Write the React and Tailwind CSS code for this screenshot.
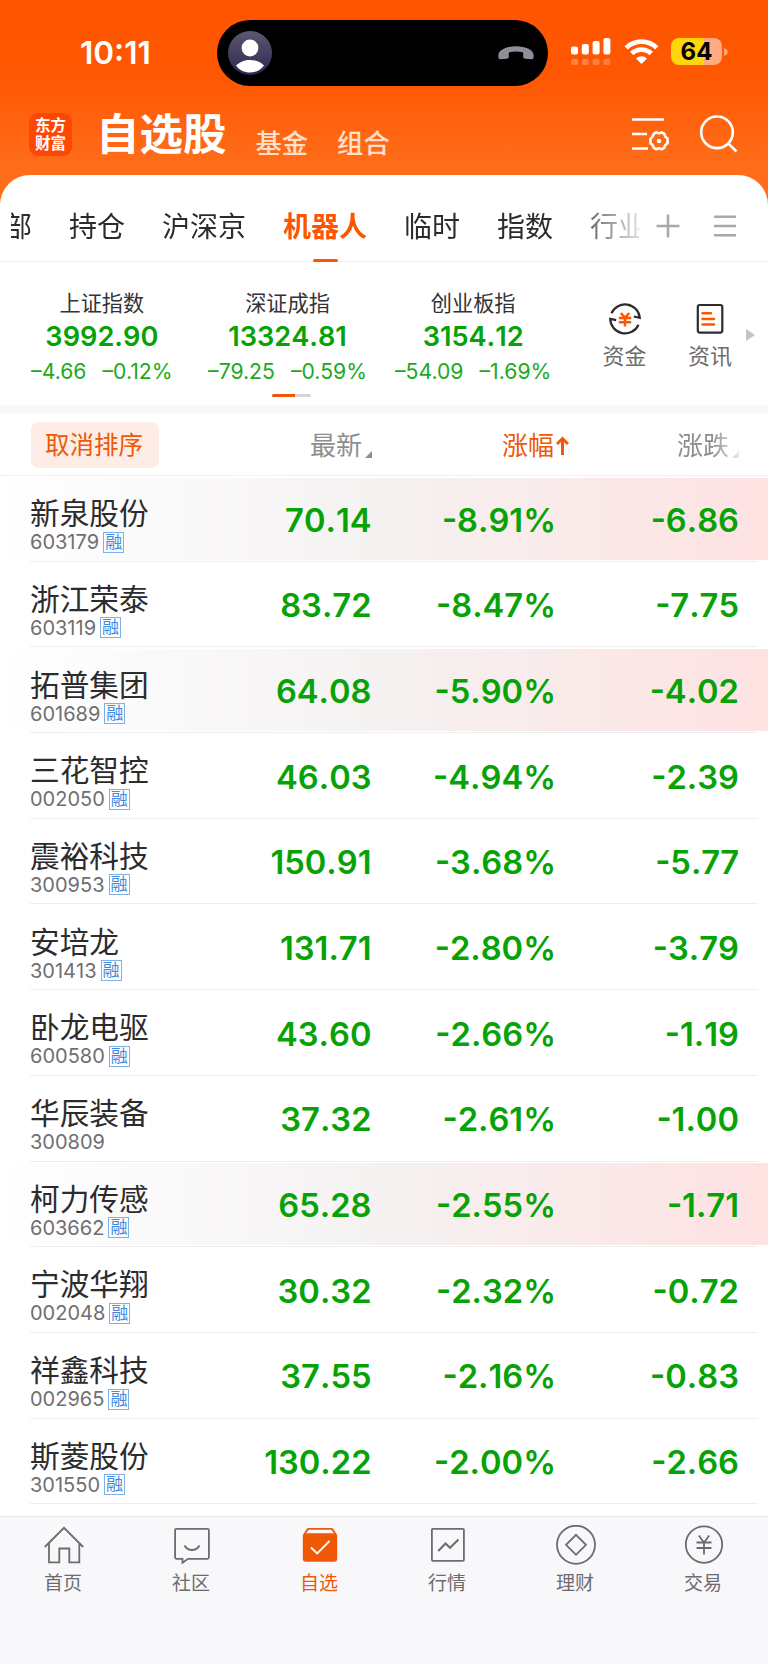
const indices = [
  { name: "上证指数", value: "3992.90", change: "–4.66", percent: "–0.12%" },
  { name: "深证成指", value: "13324.81", change: "–79.25", percent: "–0.59%" },
  { name: "创业板指", value: "3154.12", change: "–54.09", percent: "–1.69%" },
];

const stocks = [
  { name: "新泉股份", code: "603179", margin: true, price: "70.14", percent: "-8.91%", change: "-6.86", hot: true },
  { name: "浙江荣泰", code: "603119", margin: true, price: "83.72", percent: "-8.47%", change: "-7.75" },
  { name: "拓普集团", code: "601689", margin: true, price: "64.08", percent: "-5.90%", change: "-4.02", hot: true },
  { name: "三花智控", code: "002050", margin: true, price: "46.03", percent: "-4.94%", change: "-2.39" },
  { name: "震裕科技", code: "300953", margin: true, price: "150.91", percent: "-3.68%", change: "-5.77" },
  { name: "安培龙", code: "301413", margin: true, price: "131.71", percent: "-2.80%", change: "-3.79" },
  { name: "卧龙电驱", code: "600580", margin: true, price: "43.60", percent: "-2.66%", change: "-1.19" },
  { name: "华辰装备", code: "300809", margin: false, price: "37.32", percent: "-2.61%", change: "-1.00" },
  { name: "柯力传感", code: "603662", margin: true, price: "65.28", percent: "-2.55%", change: "-1.71", hot: true },
  { name: "宁波华翔", code: "002048", margin: true, price: "30.32", percent: "-2.32%", change: "-0.72" },
  { name: "祥鑫科技", code: "002965", margin: true, price: "37.55", percent: "-2.16%", change: "-0.83" },
  { name: "斯菱股份", code: "301550", margin: true, price: "130.22", percent: "-2.00%", change: "-2.66" },
];

function StatusBar() {
  return (
    <div className="flex h-[86px] items-start pt-5 text-white">
      <div className="ml-[80px] w-[137px] pt-[15px] text-[31.500px] leading-[36px] font-semibold [font-kerning:none]">10:11</div>
      <div className="flex h-[66px] w-[331px] items-center justify-between rounded-full bg-black pr-[14px] pl-[11px]">
        <svg width="44" height="44" viewBox="0 0 44 44">
          <defs>
            <linearGradient id="avatar" x1="0" y1="0" x2="0" y2="1">
              <stop offset="0" stopColor="#5c5670" />
              <stop offset="1" stopColor="#2f2850" />
            </linearGradient>
          </defs>
          <circle cx="22" cy="22" r="22" fill="url(#avatar)" />
          <circle cx="22" cy="17" r="8.4" fill="#fff" />
          <path d="M8 34.500C12 31 16 29 22 29s10 2 14 5.500C33 39 27.500 41.500 22 41.500S11 39 8 34.500Z" fill="#fff" />
        </svg>
        <svg width="36" height="14" viewBox="0 0 36 14" fill="#8f8d98">
          <path d="M.3 9.500C.3 4 8 .3 18 .3S35.700 4 35.700 9.500c0 3-.6 4-2.500 3.800l-6-.6c-1.400-.2-2-.8-2-2.200V7.500c0-1-.5-1.400-1.500-1.600-3.500-.7-7.900-.7-11.400 0-1 .2-1.500.6-1.500 1.600v3c0 1.400-.6 2-2 2.200l-6 .6C.9 13.500.3 12.500.3 9.500Z" />
        </svg>
      </div>
      <svg className="mt-[18px] ml-[23px]" width="40" height="27" viewBox="0 0 40 27" fill="#fff">
        <rect x="0" y="8.500" width="7" height="8" rx="2" />
        <rect x="10.800" y="6" width="7" height="10.500" rx="2" />
        <rect x="21.600" y="3" width="7" height="13.500" rx="2" />
        <rect x="32.400" y="0" width="7" height="16.500" rx="2" />
        <g opacity=".25">
          <rect x="0" y="20.700" width="7" height="6.300" rx="2" />
          <rect x="10.800" y="20.700" width="7" height="6.300" rx="2" />
          <rect x="21.600" y="20.700" width="7" height="6.300" rx="2" />
          <rect x="32.400" y="20.700" width="7" height="6.300" rx="2" />
        </g>
      </svg>
      <svg className="mt-[18px] ml-[12.500px]" width="35" height="27" viewBox="0 0 35 27">
        <g fill="none" stroke="#fff" strokeWidth="4.800">
          <path d="M2.200 9.900a22 22 0 0 1 30.600 0" />
          <path d="M7.700 15.600a14.200 14.200 0 0 1 19.600 0" />
        </g>
        <path d="M17.500 26 12 20.500a8 8 0 0 1 11 0Z" fill="#fff" />
      </svg>
      <div className="mt-[18px] ml-[12.500px] flex h-[27px] w-[51px] items-center justify-center rounded-[8px] bg-[linear-gradient(90deg,#ffd60a_64%,#ffaa80_64%)] text-[24px] leading-[28px] font-bold text-black">
        64
      </div>
      <svg className="mt-[28px] ml-[2px]" width="4" height="8" viewBox="0 0 4 8">
        <path d="M0 0c5 1.500 5 6.500 0 8Z" fill="#ffaa80" />
      </svg>
    </div>
  );
}

function Header() {
  return (
    <div className="flex h-[89px] items-start text-white">
      <div className="mt-[27px] ml-[29px] flex h-[43px] w-[43px] flex-col items-center justify-center rounded-[9px] bg-[#ff4705] text-[15.500px] leading-[17.500px] font-bold">
        <span>东方</span>
        <span>财富</span>
      </div>
      <h1 className="mt-[18px] ml-[24px] text-[43.500px] leading-[60px] font-bold">自选股</h1>
      <span className="mt-[38px] ml-[29px] text-[26.300px] leading-[40px] font-medium text-[#ffe0cf]">基金</span>
      <span className="mt-[38px] ml-[29px] text-[26.300px] leading-[40px] font-medium text-[#ffe0cf]">组合</span>
      <svg className="mt-[31px] ml-auto" width="38" height="36" viewBox="0 0 38 36" fill="none" stroke="#fff" strokeWidth="2.600">
        <path d="M0 2.500h32M0 17h15M0 31.500h16" />
        <path
          d="M24.300 15.300q2.700 1.900 5.400 0l2.700 1.600q.3 3.200 3.100 4.500v5q-2.800 1.300-3.100 4.300l-2.700 1.600q-2.700-1.900-5.400 0l-2.700-1.600q-.3-3-3.100-4.300v-5q2.800-1.300 3.100-4.500Z"
          strokeLinejoin="round"
        />
        <circle cx="27" cy="24" r="2.300" fill="#fff" stroke="none" />
      </svg>
      <svg className="mt-[29px] mr-[30px] ml-[30px]" width="38" height="38" viewBox="0 0 38 38" fill="none" stroke="#fff" strokeWidth="2.600">
        <circle cx="17" cy="17.300" r="15.800" />
        <path d="m28.200 28.300 8.300 8.200" />
      </svg>
    </div>
  );
}

function GroupTabs() {
  return (
    <div className="flex h-[87px] items-start border-b-[1.500px] border-[#eeeef0] text-[28px] leading-[40px] text-[#2c2c2e]">
      <div className="mt-[32px] ml-[11px] flex w-[628px] overflow-hidden whitespace-nowrap [mask-image:linear-gradient(90deg,#000_88%,transparent_102%)]">
        <div className="-ml-[7px] flex shrink-0 gap-[37px]">
          <span>部</span>
          <span>持仓</span>
          <span>沪深京</span>
          <div className="flex flex-col items-center font-bold text-[#ff5500]">
            <span>机器人</span>
            <span className="mt-[11.500px] h-[3px] w-[25px] rounded-full bg-[#ff5500]" />
          </div>
          <span>临时</span>
          <span>指数</span>
          <span>行业</span>
        </div>
      </div>
      <svg className="mt-[38.500px] ml-[17px]" width="24" height="24" viewBox="0 0 24 24" stroke="#a9a9ab" strokeWidth="2.600">
        <path d="M12 .5v23M.5 12h23" />
      </svg>
      <svg className="mt-[39.500px] ml-[34px]" width="22" height="23" viewBox="0 0 22 23" stroke="#a9a9ab" strokeWidth="2.400">
        <path d="M0 1.800h22M0 11h22M0 20.300h22" />
      </svg>
    </div>
  );
}

function IndexStrip() {
  return (
    <div className="flex h-[151px] flex-col border-b-8 border-[#f6f7f9]">
      <div className="flex h-[132px] items-start">
        <div className="ml-[9px] flex w-[557px]">
          {indices.map((item) => (
            <div key={item.name} className="flex flex-1 flex-col items-center whitespace-nowrap">
              <span className="mt-[25.500px] text-[21.200px] leading-[30px] text-[#333335]">{item.name}</span>
              <span className="mt-[4.500px] text-[27.200px] leading-[30px] font-semibold text-[#06a206] [font-kerning:none]">{item.value}</span>
              <div className="mt-[6px] flex gap-[16px] text-[21.200px] leading-[26px] text-[#1aaa1a]">
                <span>{item.change}</span>
                <span>{item.percent}</span>
              </div>
            </div>
          ))}
        </div>
        <div className="mt-[40px] ml-[25.500px] flex w-[66px] flex-col items-center text-[22px] leading-[30px] text-[#6c6c6e]">
          <svg width="34" height="34" viewBox="0 0 34 34" fill="none" strokeWidth="2.200">
            <path d="M3.500 11.300a14.800 14.800 0 0 1 28.300 4.500l-6-1.300M30.500 22.700A14.800 14.800 0 0 1 2.200 16.800l6 1.300" stroke="#2c2c2e" />
            <path d="m12.800 11 4.200 4.800 4.200-4.800M10.800 16h12.400M10.800 20.300h12.400M17 15.500v9" stroke="#ff5500" strokeWidth="2.500" />
          </svg>
          <span className="mt-[5px]">资金</span>
        </div>
        <div className="mt-[40px] ml-[19.500px] flex w-[66px] flex-col items-center text-[22px] leading-[30px] text-[#6c6c6e]">
          <svg width="34" height="34" viewBox="0 0 34 34" fill="none" strokeWidth="2.200">
            <rect x="4.800" y="3" width="24.500" height="27.600" rx="2" stroke="#2c2c2e" />
            <path d="M9.500 11.300h8.500M9.500 17h11.500M9.500 22.500h11.500" stroke="#ff5500" strokeWidth="2.400" strokeLinecap="round" />
          </svg>
          <span className="mt-[5px]">资讯</span>
        </div>
        <svg className="mt-[67px] ml-[3px]" width="9" height="12" viewBox="0 0 9 12">
          <path d="M0 0v12l9-6Z" fill="#c4c4c6" />
        </svg>
      </div>
      <div className="ml-[272px] flex h-[3px] w-[39px] overflow-hidden rounded-full bg-[#d3d5dc]">
        <span className="w-[23px] bg-[#ef5806]" />
      </div>
    </div>
  );
}

function SortMark() {
  return (
    <svg className="mt-[17px] ml-[3px]" width="7" height="7" viewBox="0 0 7 7">
      <path d="M7 0v7H0Z" fill="#8e8e90" />
    </svg>
  );
}

function TableHead() {
  return (
    <div className="flex h-[63px] items-center border-b-[1.500px] border-[#f0f0f2] pt-[2px] text-[26px] leading-[36px] text-[#8e8e90]">
      <button className="ml-[31px] h-[46px] w-[128px] rounded-[8px] bg-[#fdede6] pr-[2px] text-[24.500px] leading-[47px] text-[#ef5806]">
        取消排序
      </button>
      <div className="flex w-[213px] items-center justify-end pt-px">
        <span>最新</span>
        <SortMark />
      </div>
      <div className="flex w-[197px] items-center justify-end pt-px text-[#ef5806]">
        <span>涨幅</span>
        <svg className="ml-[2px]" width="13" height="20" viewBox="0 0 13 20" fill="none" stroke="#ef5806" strokeWidth="3">
          <path d="M6.500 19V2.500M1 8l5.500-5.500L12 8" />
        </svg>
      </div>
      <div className="flex w-[170px] items-center justify-end pt-px [mask-image:linear-gradient(90deg,#000_84%,transparent_104%)]">
        <span>涨跌</span>
        <SortMark />
      </div>
    </div>
  );
}

function StockRow({ stock }) {
  return (
    <div className="flex h-[85.700px] flex-col pt-[1.500px]">
      <div className={stock.hot ? "flex h-[82px] bg-[linear-gradient(90deg,#fff_0%,#f5f2f2_48%,#fee2e2_100%)]" : "flex h-[82px]"}>
        <div className="w-[170px] pl-[30px]">
          <div className="mt-[16.700px] text-[29.700px] leading-[38px] text-[#2c2c2e]">{stock.name}</div>
          <div className="-mt-[1px] flex items-center">
            <span className="text-[20px] leading-[22px] text-[#6f6f71] [font-kerning:none]">{stock.code}</span>
            {stock.margin && (
              <span className="ml-[4px] h-[21px] w-[21px] border-[1.500px] border-[#7fb0ea] text-center text-[17px] leading-[18px] text-[#3f8ae0]">
                融
              </span>
            )}
          </div>
        </div>
        <div className="flex text-right text-[32.700px] leading-[85px] font-semibold text-[#06a206] [font-kerning:none]">
          <span className="w-[201.500px]">{stock.price}</span>
          <span className="w-[184.500px]">{stock.percent}</span>
          <span className="w-[183px]">{stock.change}</span>
        </div>
      </div>
      <div className="mt-auto mr-[10px] ml-[30px] h-px bg-[#eeeef0]" />
    </div>
  );
}

function NavItem({ label, active, children }) {
  return (
    <div className={active ? "flex w-32 flex-col items-center text-[#ef5806]" : "flex w-32 flex-col items-center text-[#6c6c6e]"}>
      <svg className="mt-[8px]" width="40" height="40" viewBox="0 0 40 40" fill="none" stroke="currentColor" strokeWidth="1.800">
        {children}
      </svg>
      <span className="mt-[5px] pr-[2px] text-[19px] leading-[28px]">{label}</span>
    </div>
  );
}

function BottomNav() {
  return (
    <nav className="flex h-[149px] border-t-[1.500px] border-b border-t-[#e8e8ea] border-b-white bg-[#f8f8fb]">
      <NavItem label="首页">
        <path d="M.8 22 20 2.800 39.200 22M5 18v19.300h10.300V23.500h10v13.800h10V18" />
      </NavItem>
      <NavItem label="社区">
        <path d="M4.600 3.800h30.800q1.500 0 1.500 1.500v27q0 1.500-1.500 1.500H16l-5.500 4v-4H4.600q-1.500 0-1.500-1.500v-27q0-1.500 1.500-1.500Z" />
        <path d="M12.500 20.500c3.500 6 11.500 6 15 0" strokeWidth="2" />
      </NavItem>
      <NavItem label="自选" active>
        <path d="M2.800 10 7 3.500Q7.500 3 8.500 3h23q1 0 1.500.5L37.200 10v23.500q0 3.200-3.200 3.200H6q-3.200 0-3.200-3.200Z" fill="currentColor" stroke="none" />
        <path d="M8.700 4.700h22.600L34 8.300H6Z" fill="#f8f8fb" stroke="none" />
        <path d="m11 22.500 6.200 6L29.500 16" stroke="#fff" />
      </NavItem>
      <NavItem label="行情">
        <rect x="3.900" y="3.800" width="32" height="32" rx="1" />
        <path d="m10.300 26 7.200-7.500 4.500 4.300 8.500-8.300" strokeWidth="2" />
      </NavItem>
      <NavItem label="理财">
        <circle cx="20" cy="19.800" r="19" />
        <path d="m20 9.800 10 10-10 10-10-10Z" />
      </NavItem>
      <NavItem label="交易">
        <circle cx="20" cy="19.600" r="18.200" />
        <path d="m14.800 10.500 5.200 7 5.200-7M12.500 17.500h15M12.500 23h15M20 17.500v12" />
      </NavItem>
    </nav>
  );
}

export default function App() {
  return (
    <div className="h-[1665px] w-[768px] overflow-hidden bg-[linear-gradient(180deg,#ff5500_0px,#ff5702_75px,#ff6d1a_165px)] font-['Inter','Noto_Sans_CJK_SC',sans-serif]">
      <StatusBar />
      <Header />
      <main className="flex h-[1490px] flex-col rounded-t-[30px] bg-white">
        <GroupTabs />
        <IndexStrip />
        <TableHead />
        <div className="h-[1040px] overflow-hidden">
          {stocks.map((stock) => (
            <StockRow key={stock.code} stock={stock} />
          ))}
        </div>
        <BottomNav />
      </main>
    </div>
  );
}
